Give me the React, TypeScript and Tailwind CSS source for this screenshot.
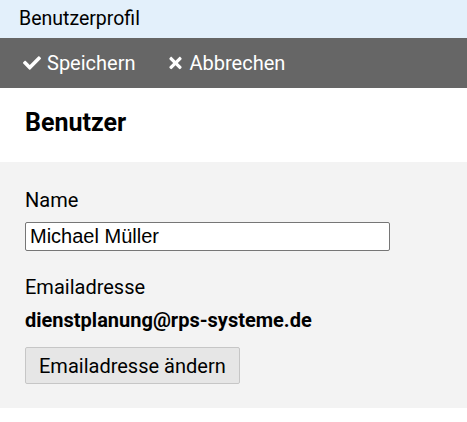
import { FaCheck, FaTimes } from "react-icons/fa"

export default function App() {
  return (
    <div className="w-[467px] min-h-[422px] bg-white font-['Roboto',sans-serif] text-black">
      <div className="h-[38px] bg-[#e3f0fb] px-[19px] flex items-center text-[19.5px]">
        Benutzerprofil
      </div>

      <div className="h-[50px] bg-[#666666] text-white text-[20px] leading-[24px] flex items-center pl-[23px] gap-[32px]">
        <button className="flex items-center gap-[6px]">
          <FaCheck className="w-[18px] h-[18px]" />
          <span>Speichern</span>
        </button>
        <button className="flex items-center gap-[7px]">
          <FaTimes className="w-[15px] h-[18px]" />
          <span>Abbrechen</span>
        </button>
      </div>

      <div className="h-[74px] px-[25px] pt-[20px]">
        <h2 className="text-[25px] leading-[29px] font-bold">Benutzer</h2>
      </div>

      <div className="h-[246px] bg-[#f3f3f3] px-[25px] pt-[26px] text-[20px] leading-[24px]">
        <label className="block">Name</label>
        <input
          type="text"
          defaultValue="Michael Müller"
          className="mt-[10px] block w-[365px] h-[29px] border border-[#767676] rounded-[2px] bg-white px-[4px] text-[20px] font-['Liberation_Sans',Arial,sans-serif] outline-none"
        />
        <div className="mt-[24px]">Emailadresse</div>
        <div className="mt-[9px] font-bold">dienstplanung@rps-systeme.de</div>
        <button className="mt-[15px] h-[37px] px-[13px] bg-[#e6e6e6] border border-[#c6c6c6] rounded-[2px]">
          Emailadresse ändern
        </button>
      </div>
    </div>
  )
}
